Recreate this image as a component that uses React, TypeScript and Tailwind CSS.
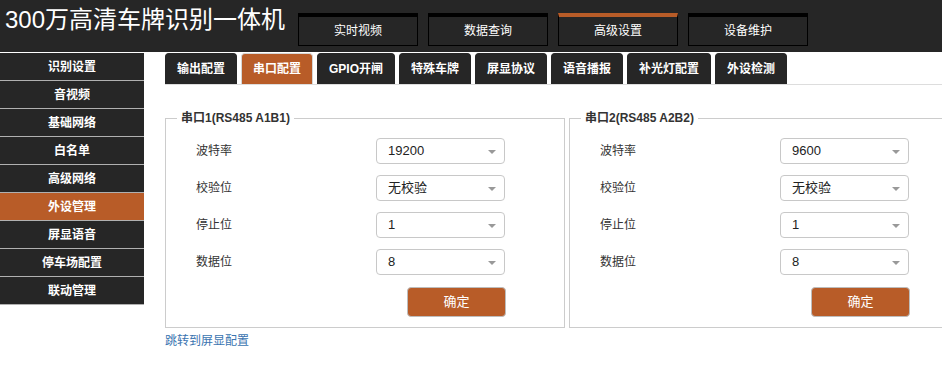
import React from 'react'

const topNav = ['实时视频', '数据查询', '高级设置', '设备维护']
const sideNav = ['识别设置', '音视频', '基础网络', '白名单', '高级网络', '外设管理', '屏显语音', '停车场配置', '联动管理']
const tabs = ['输出配置', '串口配置', 'GPIO开闸', '特殊车牌', '屏显协议', '语音播报', '补光灯配置', '外设检测']

type Port = { title: string; baud: string }

const ports: Port[] = [
  { title: '串口1(RS485 A1B1)', baud: '19200' },
  { title: '串口2(RS485 A2B2)', baud: '9600' },
]

const Select = ({ value }: { value: string }) => {
  return (
    <div className="relative w-[129px] h-[26px] border border-[#c8c8c8] rounded-[4px] bg-white flex items-center pl-[11px] text-[13px] text-[#222]">
      {value}
      <span className="absolute right-[8px] top-[11px] w-0 h-0 border-x-[4px] border-x-transparent border-t-[4px] border-t-[#999]" />
    </div>
  )
}

const PortBox = ({ port }: { port: Port }) => {
  const rows = [
    ['波特率', port.baud],
    ['校验位', '无校验'],
    ['停止位', '1'],
    ['数据位', '8'],
  ]
  return (
    <fieldset className="w-[400px] shrink-0 border border-[#cccccc] pb-[10px]">
      <legend className="ml-[11px] px-[4px] text-[12px] leading-[16px] font-bold text-[#333]">{port.title}</legend>
      <div className="pl-[30px] pr-[58px]">
        <div className="flex flex-col gap-[11px] mt-[12px]">
          {rows.map(([label, value]) => (
            <div key={label} className="flex items-center">
              <div className="w-[180px] text-[12px] text-[#333]">{label}</div>
              <Select value={value} />
            </div>
          ))}
        </div>
        <div className="flex justify-end mt-[12px]">
          <button className="w-[99px] h-[30px] rounded-[4px] border border-[#bdbdbd] bg-[#b85c28] text-white text-[13px]">
            确定
          </button>
        </div>
      </div>
    </fieldset>
  )
}

export default function App() {
  return (
    <div className="w-[942px] h-[365px] overflow-hidden bg-white font-['Liberation_Sans','Noto_Sans_CJK_SC',sans-serif]">
      <header className="h-[52px] bg-[#262626] flex">
        <h1 className="w-[298px] pl-[5px] pt-[4px] text-[24px] leading-[32px] text-white">300万高清车牌识别一体机</h1>
        <nav className="flex gap-[10px] pt-[13px]">
          {topNav.map((item) => (
            <div
              key={item}
              className={
                item === '高级设置'
                  ? 'w-[120px] h-[33px] border border-black border-t-4 border-t-[#b85c28] flex items-center justify-center text-[12px] text-white'
                  : 'w-[120px] h-[33px] border border-black border-t-4 flex items-center justify-center text-[12px] text-white'
              }
            >
              {item}
            </div>
          ))}
        </nav>
      </header>

      <div className="flex mt-px">
        <aside className="w-[144px] shrink-0">
          {sideNav.map((item) => (
            <div
              key={item}
              className={
                item === '外设管理'
                  ? 'h-[28px] border-b border-[#b0b0b0] bg-[#b85c28] flex items-center justify-center text-[12px] font-bold text-white'
                  : 'h-[28px] border-b border-[#b0b0b0] bg-[#262626] flex items-center justify-center text-[12px] font-bold text-white'
              }
            >
              {item}
            </div>
          ))}
        </aside>

        <main className="flex-1 min-w-0 pl-[21px]">
          <div className="flex gap-[4px] h-[32px] border-b border-[#dddddd]">
            {tabs.map((tab) => (
              <div
                key={tab}
                className={
                  tab === '串口配置'
                    ? 'h-[31px] px-[11px] rounded-t-[4px] border border-b-0 border-[#d6d6d6] bg-[#b85c28] flex items-center text-[12px] font-bold text-white whitespace-nowrap'
                    : 'h-[31px] px-[11px] rounded-t-[4px] border border-b-0 border-[#262626] bg-[#262626] flex items-center text-[12px] font-bold text-white whitespace-nowrap'
                }
              >
                {tab}
              </div>
            ))}
          </div>

          <div className="flex gap-[4px] mt-[25px]">
            {ports.map((port) => (
              <PortBox key={port.title} port={port} />
            ))}
          </div>

          <div className="mt-[5px] text-[12px] leading-[16px] text-[#3a74b0]">跳转到屏显配置</div>
        </main>
      </div>
    </div>
  )
}
